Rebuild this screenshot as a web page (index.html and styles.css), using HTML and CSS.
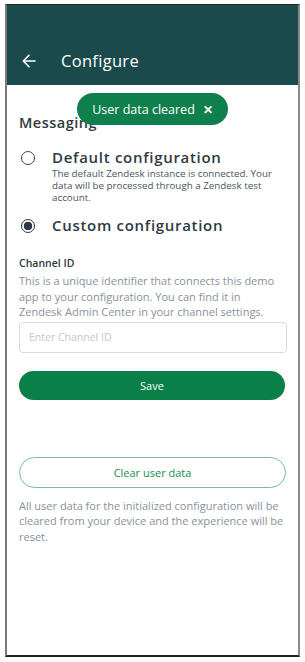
FILE: index.html
```html
<!DOCTYPE html>
<html>
<head>
<meta charset="utf-8">
<link rel="stylesheet" href="styles.css">
</head>
<body>
<div class="device">
  <header class="appbar">
    <svg class="back" width="14" height="14" viewBox="0 0 14 14"><path d="M13 7H1.5M7 1.2L1.3 7 7 12.8" fill="none" stroke="#fff" stroke-width="1.6" stroke-linecap="round" stroke-linejoin="round"/></svg>
    <span class="title">Configure</span>
  </header>
  <main class="content">
    <div class="toast">User data cleared <span class="x">✕</span></div>
    <h2 class="section">Messaging</h2>
    <div class="option">
      <span class="radio"></span>
      <div class="opt-text">
        <div class="opt-title">Default configuration</div>
        <div class="opt-desc">The default Zendesk instance is connected. Your data will be processed through a Zendesk test account.</div>
      </div>
    </div>
    <div class="option">
      <span class="radio checked"></span>
      <div class="opt-text">
        <div class="opt-title">Custom configuration</div>
      </div>
    </div>
    <div class="field-label">Channel ID</div>
    <p class="hint">This is a unique identifier that connects this demo app to your configuration. You can find it in Zendesk Admin Center in your channel settings.</p>
    <div class="input">Enter Channel ID</div>
    <div class="btn-primary">Save</div>
    <div class="btn-outline">Clear user data</div>
    <p class="hint note">All user data for the initialized configuration will be cleared from your device and the experience will be reset.</p>
  </main>
</div>
</body>
</html>
```
FILE: styles.css
```css
html, body { margin: 0; padding: 0; background: #fff; }
body { font-family: "Open Sans", Lato, sans-serif; }
.device {
  margin: 4px 0 0 5px;
  width: 291px;
  height: 650px;
  border-top: 1px solid #222;
  border-left: 2px solid #7a7a7a;
  border-right: 2px solid #8a8a8a;
  border-bottom: 2px solid #222;
  display: flex;
  flex-direction: column;
  overflow: hidden;
}
.appbar {
  height: 80px;
  background: #1a4a4c;
  display: flex;
  align-items: flex-end;
  padding: 0 0 13px 15px;
  box-sizing: border-box;
}
.back { margin-bottom: 4px; }
.title {
  color: #fff;
  font-size: 16.5px;
  margin-left: 25px;
  letter-spacing: 0.3px;
  line-height: 22px;
}
.content {
  position: relative;
  padding: 0 12px;
  flex: 1;
}
.toast {
  position: absolute;
  left: 70px;
  top: 8px;
  height: 32px;
  width: 151px;
  box-sizing: border-box;
  background: #107f4e;
  color: #fff;
  border-radius: 16px;
  font-size: 12.5px;
  display: flex;
  align-items: center;
  justify-content: center;
  gap: 8px;
}
.toast .x { font-size: 12px; font-weight: 700; }
.section {
  margin: 28px 0 0 0;
  font-size: 14.5px;
  font-weight: 600;
  color: #2f3941;
  letter-spacing: 0.5px;
  line-height: 20px;
}
.option {
  display: flex;
  gap: 17px;
  margin-top: 13px;
}
.option + .option { margin-top: 10px; }
.radio {
  width: 12px;
  height: 12px;
  border: 1.5px solid #444;
  border-radius: 50%;
  margin: 5px 0 0 2px;
  flex: none;
}
.radio.checked {
  background: radial-gradient(circle, #2f3941 0 4px, #fff 4.6px);
  border-color: #2f3941;
}
.opt-title {
  font-size: 15px;
  font-weight: 600;
  color: #2f3941;
  letter-spacing: 0.7px;
  line-height: 22px;
}
.opt-desc {
  font-size: 9.8px;
  color: #49545c;
  line-height: 12px;
  max-width: 222px;
}
.field-label {
  margin-top: 20px;
  font-size: 10.5px;
  font-weight: 600;
  color: #2f3941;
  line-height: 15px;
}
.hint {
  margin: 2px 0 0 0;
  font-size: 11px;
  color: #87929d;
  line-height: 15.5px;
}
.input {
  margin-top: 2px;
  height: 31px;
  border: 1px solid #d8dcde;
  border-radius: 4px;
  box-sizing: border-box;
  font-size: 10.5px;
  color: #c2c8cc;
  display: flex;
  align-items: center;
  padding-left: 9px;
  width: 268px;
}
.btn-primary {
  margin-top: 18px;
  height: 29px;
  width: 266px;
  border-radius: 15px;
  background: #0b7f48;
  color: #fff;
  font-size: 11px;
  display: flex;
  align-items: center;
  justify-content: center;
}
.btn-outline {
  margin-top: 57px;
  height: 31px;
  width: 267px;
  border-radius: 16px;
  border: 1px solid #6cc595;
  box-sizing: border-box;
  color: #188a54;
  font-size: 11px;
  display: flex;
  align-items: center;
  justify-content: center;
}
.note { margin-top: 10px; width: 270px; }
```
